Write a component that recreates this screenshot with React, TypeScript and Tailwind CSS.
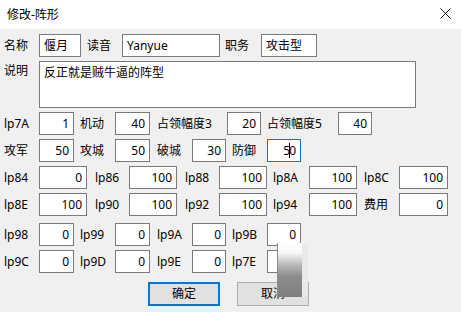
import type { ReactNode } from "react";

const FONT = { fontFamily: '"Noto Sans", "Noto Sans CJK SC", sans-serif' };

function Box({ w, children, right = false, focus = false, cls = "" }: { w: string; children?: ReactNode; right?: boolean; focus?: boolean; cls?: string }) {
  return (
    <div
      className={`${w} h-[23px] shrink-0 bg-white border flex items-center text-[12px] leading-none ${focus ? "border-[#0078d7]" : "border-[#7a7a7a]"} ${right ? "justify-end pr-[4px]" : "pl-[4px]"} ${cls}`}
    >
      {children}
    </div>
  );
}

function Lbl({ w, children, cls = "" }: { w: string; children: ReactNode; cls?: string }) {
  return <div className={`${w} shrink-0 text-[12px] leading-none ${cls}`}>{children}</div>;
}

export default function App() {
  return (
    <div className="w-[461px] h-[312px] bg-[#f0f0f0] text-black relative overflow-hidden" style={FONT}>
      {/* title bar */}
      <div className="h-[29px] bg-white flex items-center justify-between pl-[7px] pr-[10px]">
        <span className="text-[12px] leading-none">修改-阵形</span>
        <svg width="11" height="11" viewBox="0 0 11 11" className="mt-[-2px]">
          <path d="M0.5 0.5 L10.5 10.5 M10.5 0.5 L0.5 10.5" stroke="#111" strokeWidth="1" />
        </svg>
      </div>

      <div className="pl-[4px] pt-[5px] flex flex-col">
        {/* 名称 row */}
        <div className="flex items-center">
          <Lbl w="w-[35px]">名称</Lbl>
          <Box w="w-[42px]">偃月</Box>
          <Lbl w="w-[35px]" cls="ml-[6px]">读音</Lbl>
          <Box w="w-[98px]">Yanyue</Box>
          <Lbl w="w-[36px]" cls="ml-[5px]">职务</Lbl>
          <Box w="w-[56px]">攻击型</Box>
        </div>

        {/* 说明 */}
        <div className="flex mt-[4px]">
          <Lbl w="w-[35px]" cls="pt-[4px]">说明</Lbl>
          <div className="w-[377px] h-[47px] bg-white border border-[#7a7a7a] pl-[4px] pt-[5px] text-[12px] leading-none">
            反正就是贼牛逼的阵型
          </div>
        </div>

        {/* lp7A row */}
        <div className="flex items-center mt-[4px]">
          <Lbl w="w-[35px]">lp7A</Lbl>
          <Box w="w-[35px]" right>1</Box>
          <Lbl w="w-[35px]" cls="ml-[6px]">机动</Lbl>
          <Box w="w-[35px]" right>40</Box>
          <Lbl w="w-[70px]" cls="ml-[7px]">占领幅度3</Lbl>
          <Box w="w-[34px]" right>20</Box>
          <Lbl w="w-[71px]" cls="ml-[6px]">占领幅度5</Lbl>
          <Box w="w-[34px]" right>40</Box>
        </div>

        {/* 攻军 row */}
        <div className="flex items-center mt-[4px]">
          <Lbl w="w-[35px]">攻军</Lbl>
          <Box w="w-[35px]" right>50</Box>
          <Lbl w="w-[35px]" cls="ml-[6px]">攻城</Lbl>
          <Box w="w-[35px]" right>50</Box>
          <Lbl w="w-[35px]" cls="ml-[7px]">破城</Lbl>
          <Box w="w-[34px]" right>30</Box>
          <Lbl w="w-[35px]" cls="ml-[6px]">防御</Lbl>
          <Box w="w-[34px]" right focus>
            5<span className="inline-block w-px h-[15px] bg-black mx-[-1px] relative z-10" />0
          </Box>
        </div>

        {/* lp84 row */}
        <div className="flex items-center mt-[4px]">
          <Lbl w="w-[35px]">lp84</Lbl>
          <Box w="w-[48px]" right>0</Box>
          <Lbl w="w-[34px]" cls="ml-[8px]">lp86</Lbl>
          <Box w="w-[48px]" right>100</Box>
          <Lbl w="w-[34px]" cls="ml-[8px]">lp88</Lbl>
          <Box w="w-[48px]" right>100</Box>
          <Lbl w="w-[36px]" cls="ml-[6px]">lp8A</Lbl>
          <Box w="w-[48px]" right>100</Box>
          <Lbl w="w-[35px]" cls="ml-[7px]">lp8C</Lbl>
          <Box w="w-[49px]" right>100</Box>
        </div>

        {/* lp8E row */}
        <div className="flex items-center mt-[4px]">
          <Lbl w="w-[35px]">lp8E</Lbl>
          <Box w="w-[48px]" right>100</Box>
          <Lbl w="w-[34px]" cls="ml-[8px]">lp90</Lbl>
          <Box w="w-[48px]" right>100</Box>
          <Lbl w="w-[34px]" cls="ml-[8px]">lp92</Lbl>
          <Box w="w-[48px]" right>100</Box>
          <Lbl w="w-[36px]" cls="ml-[6px]">lp94</Lbl>
          <Box w="w-[48px]" right>100</Box>
          <Lbl w="w-[35px]" cls="ml-[7px]">费用</Lbl>
          <Box w="w-[49px]" right>0</Box>
        </div>

        {/* lp98 row */}
        <div className="flex items-center mt-[7px]">
          <Lbl w="w-[35px]">lp98</Lbl>
          <Box w="w-[35px]" right>0</Box>
          <Lbl w="w-[35px]" cls="ml-[6px]">lp99</Lbl>
          <Box w="w-[35px]" right>0</Box>
          <Lbl w="w-[35px]" cls="ml-[7px]">lp9A</Lbl>
          <Box w="w-[34px]" right>0</Box>
          <Lbl w="w-[35px]" cls="ml-[6px]">lp9B</Lbl>
          <Box w="w-[34px]" right>0</Box>
        </div>

        {/* lp9C row */}
        <div className="flex items-center mt-[4px]">
          <Lbl w="w-[35px]">lp9C</Lbl>
          <Box w="w-[35px]" right>0</Box>
          <Lbl w="w-[35px]" cls="ml-[6px]">lp9D</Lbl>
          <Box w="w-[35px]" right>0</Box>
          <Lbl w="w-[35px]" cls="ml-[7px]">lp9E</Lbl>
          <Box w="w-[34px]" right>0</Box>
          <Lbl w="w-[35px]" cls="ml-[6px]">lp7E</Lbl>
          <Box w="w-[34px]" right></Box>
        </div>

        {/* buttons */}
        <div className="flex mt-[9px] pl-[144px] gap-[17px]">
          <div className="w-[72px] h-[24px] bg-[#e1e1e1] border-2 border-[#0078d7] flex items-center justify-center text-[12px] leading-none">
            确定
          </div>
          <div className="w-[72px] h-[24px] bg-[#e1e1e1] border border-[#adadad] flex items-center justify-center text-[12px] leading-none">
            取消
          </div>
        </div>
      </div>

      {/* stray drag-shadow artifact over the lower fields */}
      <div
        className="absolute left-[277px] top-[243px] w-[25px] h-[54px] border-l border-[#8a8a8a]"
        style={{ background: "linear-gradient(to bottom, #ffffff 0%, #f7f7f7 18%, #b5b5b5 42%, #8c8c8c 62%, #7e7e7e 100%)" }}
      />
      <div className="absolute left-[302px] top-[245px] w-[6px] h-[52px] bg-[#e9e9e9]" />
    </div>
  );
}
